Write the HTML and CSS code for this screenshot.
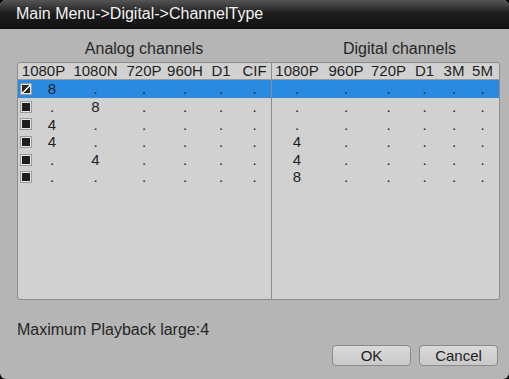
FILE: index.html
```html
<!DOCTYPE html>
<html lang="en">
  <head>
    <meta charset="UTF-8" />
    <title>ChannelType</title>
    <link rel="stylesheet" href="styles.css">
  </head>
  <body>
    <div class="window">
      <div class="titlebar">Main Menu-&gt;Digital-&gt;ChannelType</div>

      <div class="content">
        <div class="group-titles">
          <div class="group-title left">Analog channels</div>
          <div class="group-title right">Digital channels</div>
        </div>

        <div class="channel-table">
          <!-- Analog side -->
          <div class="panel analog">
            <div class="row head">
              <span>1080P</span><span>1080N</span><span>720P</span><span>960H</span><span>D1</span><span>CIF</span>
            </div>
            <div class="row selected">
              <span class="first"><i class="check on"></i><b>8</b></span><span>.</span><span>.</span><span>.</span><span>.</span><span>.</span>
            </div>
            <div class="row">
              <span class="first"><i class="check"></i><b>.</b></span><span>8</span><span>.</span><span>.</span><span>.</span><span>.</span>
            </div>
            <div class="row">
              <span class="first"><i class="check"></i><b>4</b></span><span>.</span><span>.</span><span>.</span><span>.</span><span>.</span>
            </div>
            <div class="row">
              <span class="first"><i class="check"></i><b>4</b></span><span>.</span><span>.</span><span>.</span><span>.</span><span>.</span>
            </div>
            <div class="row">
              <span class="first"><i class="check"></i><b>.</b></span><span>4</span><span>.</span><span>.</span><span>.</span><span>.</span>
            </div>
            <div class="row">
              <span class="first"><i class="check"></i><b>.</b></span><span>.</span><span>.</span><span>.</span><span>.</span><span>.</span>
            </div>
          </div>

          <!-- Digital side -->
          <div class="panel digital">
            <div class="row head">
              <span>1080P</span><span>960P</span><span>720P</span><span>D1</span><span>3M</span><span>5M</span>
            </div>
            <div class="row selected">
              <span>.</span><span>.</span><span>.</span><span>.</span><span>.</span><span>.</span>
            </div>
            <div class="row">
              <span>.</span><span>.</span><span>.</span><span>.</span><span>.</span><span>.</span>
            </div>
            <div class="row">
              <span>.</span><span>.</span><span>.</span><span>.</span><span>.</span><span>.</span>
            </div>
            <div class="row">
              <span>4</span><span>.</span><span>.</span><span>.</span><span>.</span><span>.</span>
            </div>
            <div class="row">
              <span>4</span><span>.</span><span>.</span><span>.</span><span>.</span><span>.</span>
            </div>
            <div class="row">
              <span>8</span><span>.</span><span>.</span><span>.</span><span>.</span><span>.</span>
            </div>
          </div>
        </div>

        <div class="info">Maximum Playback large:4</div>

        <div class="buttons">
          <button class="btn">OK</button>
          <button class="btn">Cancel</button>
        </div>
      </div>
    </div>
  </body>
</html>
```

FILE: styles.css
```css
body {
  margin: 0;
  padding: 0;
  background: #000;
  font-family: "Liberation Sans", Arial, sans-serif;
  font-size: 16px;
  color: #1e1e1e;
}
.window {
  width: 509px;
  height: 379px;
  background: #b5b5b5;
  border-radius: 6px;
  overflow: hidden;
}
.titlebar {
  height: 29px;
  line-height: 28px;
  padding-left: 16px;
  color: #f2f2f2;
  background: linear-gradient(#555555 0px, #1c1c1c 14px, #121212 29px);
}
.content {
  padding: 0 9px 0 17px;
}
.group-titles {
  display: flex;
  height: 33px;
  line-height: 39px;
  color: #262626;
}
.group-title.left {
  width: 254px;
  text-align: center;
}
.group-title.right {
  padding-left: 72px;
}
.channel-table {
  display: flex;
  height: 238px;
  font-size: 15px;
  background: #d1d1d1;
  border: 1px solid #8c8c8c;
  border-radius: 3px;
  box-sizing: border-box;
}
.panel.analog {
  width: 253px;
  border-right: 1px solid #8c8c8c;
}
.panel.digital {
  flex: 1;
}
.row {
  display: grid;
  height: 17.6px;
  line-height: 17.6px;
  white-space: nowrap;
}
.analog .row {
  grid-template-columns: 51px 53px 44px 38px 34px 33px;
}
.digital .row {
  grid-template-columns: 50px 48px 37px 35px 24px 33px;
}
.row span {
  text-align: center;
}
.row.head {
  height: 16px;
  line-height: 16px;
  border-bottom: 1px solid #9a9a9a;
}
.row.selected {
  background: #2a8ae0;
  height: 18px;
  line-height: 18px;
}
.row .first {
  display: flex;
  align-items: center;
  padding-left: 3px;
}
.row .first b {
  flex: 1;
  font-weight: normal;
  text-align: center;
  padding-left: 4px;
}
.check {
  display: block;
  width: 8px;
  height: 8px;
  background: #1e1e1e;
  border: 1px solid #e6e6e6;
  outline: 1px solid #9a9a9a;
}
.check.on {
  background: linear-gradient(135deg, transparent 44%, #f0f0f0 44%, #f0f0f0 58%, transparent 58%) #2a2a2a;
}
.info {
  margin-top: 21px;
  line-height: 18px;
  color: #262626;
}
.buttons {
  display: flex;
  justify-content: flex-end;
  gap: 8px;
  margin-top: 6px;
  padding-right: 2px;
}
.btn {
  width: 79px;
  height: 21px;
  padding: 0;
  font-family: "Liberation Sans", Arial, sans-serif;
  font-size: 15px;
  color: #1e1e1e;
  background: linear-gradient(#dadada, #c9c9c9);
  border: 1px solid #8a8a8a;
  border-radius: 4px;
}
```
